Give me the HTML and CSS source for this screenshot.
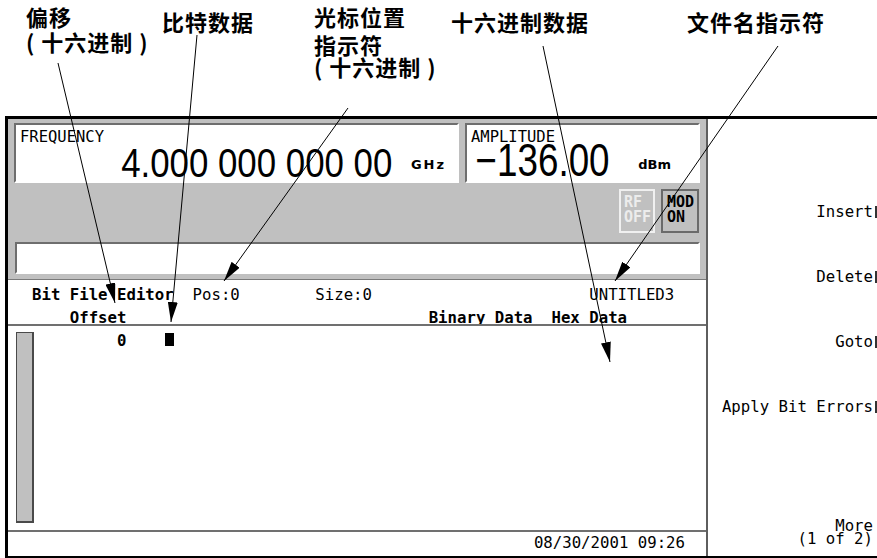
FILE: index.html
```html
<!DOCTYPE html>
<html>
    <head>
        <meta charset="UTF-8">
        <title>Bit File Editor</title>
        <link rel="stylesheet" href="styles.css">
    </head>
    <body>
        <div class="page">
            <!-- callout labels -->
            <div class="callouts">
                <div class="callout c-offset">偏移<br>( 十六进制 )</div>
                <div class="callout c-bits">比特数据</div>
                <div class="callout c-pos">
                    <div>光标位置</div>
                    <div class="pos-2">指示符</div>
                    <div class="pos-3">( 十六进制 )</div>
                </div>
                <div class="callout c-hex">十六进制数据</div>
                <div class="callout c-file">文件名指示符</div>
            </div>

            <div class="screen">
                <div class="display">
                    <div class="panel">
                        <div class="readouts">
                            <div class="readout freq">
                                <div class="readout-label">FREQUENCY</div>
                                <div class="readout-value">
                                    <span class="digits">4.000 000 000 00</span>
                                    <span class="unit">GHz</span>
                                </div>
                            </div>
                            <div class="readout ampl">
                                <div class="readout-label">AMPLITUDE</div>
                                <div class="readout-value">
                                    <span class="digits">&minus;136.00</span>
                                    <span class="unit">dBm</span>
                                </div>
                            </div>
                        </div>
                        <div class="indicators">
                            <div class="ind ind-off">RF<br>OFF</div>
                            <div class="ind ind-on">MOD<br>ON</div>
                        </div>
                        <div class="message"></div>
                    </div>

                    <div class="editor">
                        <div class="editor-head">
                            <div class="line"><b>Bit File Editor</b>  Pos:0        Size:0                       UNTITLED3</div>
                            <div class="line"><b>    Offset                                Binary Data  Hex Data</b></div>
                        </div>
                        <div class="editor-body">
                            <div class="scrollbar"></div>
                            <div class="rows">
                                <div class="row"><span class="cell-offset">0</span><span class="cursor"></span></div>
                            </div>
                        </div>
                        <div class="status">08/30/2001 09:26</div>
                    </div>
                </div>

                <div class="softkeys">
                    <div class="softkey">Insert<span class="edge"></span></div>
                    <div class="softkey">Delete<span class="edge"></span></div>
                    <div class="softkey">Goto<span class="edge"></span></div>
                    <div class="softkey">Apply Bit Errors<span class="edge"></span></div>
                    <div class="softkey"></div>
                    <div class="softkey more">   More
(1 of 2)</div>
                </div>
            </div>

            <!-- leader lines with arrow heads -->
            <svg class="leaders" width="877" height="558" viewBox="0 0 877 558">
                <defs>
                    <marker id="tip" markerWidth="20" markerHeight="10" refX="20" refY="5" orient="auto" markerUnits="userSpaceOnUse">
                        <path d="M0,0 L20,5 L0,10 Z" fill="#000"/>
                    </marker>
                </defs>
                <line x1="58" y1="63" x2="115" y2="303" marker-end="url(#tip)"/>
                <line x1="197" y1="35" x2="171" y2="322" marker-end="url(#tip)"/>
                <line x1="348" y1="108" x2="224" y2="281" marker-end="url(#tip)"/>
                <line x1="543" y1="46" x2="610" y2="362" marker-end="url(#tip)"/>
                <line x1="778" y1="46" x2="615" y2="281" marker-end="url(#tip)"/>
            </svg>
        </div>
    </body>
</html>
```

FILE: styles.css
```css
body{
    margin: 0;
    background: #fff;
    color: #000;
    font-family: "DejaVu Sans Mono", monospace;
}
.page{
    position: relative;
    width: 877px;
    height: 558px;
    overflow: hidden;
}

/* callouts */
.callouts{
    position: relative;
    height: 116px;
    font-family: "Noto Sans CJK SC", sans-serif;
    font-weight: 700;
    font-size: 22px;
    line-height: 24px;
    letter-spacing: 1px;
}
.callout{
    position: absolute;
    white-space: nowrap;
}
.c-offset{
    left: 26px;
    top: 4px;
    line-height: 25px;
}
.c-bits{
    left: 162px;
    top: 9px;
}
.c-pos{
    left: 314px;
    top: 4px;
}
.pos-2{
    margin-top: 4px;
}
.pos-3{
    margin-top: -2px;
}
.c-hex{
    left: 451px;
    top: 9px;
}
.c-file{
    left: 687px;
    top: 9px;
}

/* instrument screen */
.screen{
    display: flex;
    height: 437px;
    margin-left: 5px;
    border: solid #000;
    border-width: 3px 0 2px 3px;
    overflow: hidden;
}
.display{
    display: flex;
    flex-direction: column;
    flex-shrink: 0;
    width: 698px;
    border-right: 2px solid #5e5e5e;
}
.panel{
    background: #c0c0c0;
    padding: 4px 6px 5px 6px;
    border-bottom: 1px solid #7a7a7a;
}
.readouts{
    display: flex;
    gap: 6px;
}
.readout{
    box-sizing: border-box;
    height: 60px;
    background: #fff;
    border: 2px solid;
    border-color: #6e6e6e #fff #fff #6e6e6e;
    padding: 5px 11px 0 4px;
}
.freq{
    width: 445px;
}
.ampl{
    width: 235px;
    padding-right: 27px;
}
.readout-label{
    font-size: 15.5px;
    line-height: 14px;
}
.readout-value{
    display: flex;
    justify-content: flex-end;
    align-items: flex-end;
}
.digits{
    display: inline-block;
    flex-shrink: 0;
    font-family: "Liberation Sans", sans-serif;
    white-space: pre;
    transform: scaleX(.8);
    transform-origin: right center;
}
.freq .readout-value{
    margin-top: 4px;
}
.freq .digits{
    font-size: 40.5px;
    line-height: 30px;
    transform: scaleX(.86);
}
.ampl .readout-value{
    margin-top: 0;
}
.ampl .digits{
    font-size: 46px;
    line-height: 33px;
}
.unit{
    font-family: "DejaVu Sans", sans-serif;
    font-weight: 700;
    font-size: 13px;
    line-height: 10px;
}
.freq .unit{
    margin: 0 0 8px 19px;
    letter-spacing: 2px;
}
.ampl .unit{
    margin: 0 0 7px 29px;
}
.indicators{
    display: flex;
    justify-content: flex-end;
    gap: 6px;
    margin-top: 6px;
    padding-right: 1px;
}
.ind{
    box-sizing: border-box;
    height: 44px;
    padding: 4px 0 0 3px;
    border: 2px solid;
    font-weight: 700;
    font-size: 15px;
    line-height: 15px;
}
.ind-off{
    width: 36px;
    color: #ececec;
    border-color: #f0f0f0;
}
.ind-on{
    width: 38px;
    padding-left: 4px;
    border-color: #6a6a6a;
}
.message{
    height: 32px;
    box-sizing: border-box;
    margin: 9px 0 0 1px;
    width: 685px;
    background: #fff;
    border: 2px solid;
    border-color: #6e6e6e #fff #fff #6e6e6e;
}

/* editor */
.editor{
    display: flex;
    flex-direction: column;
    flex: 1;
    font-size: 15.7px;
}
.editor-head{
    height: 46px;
    box-sizing: border-box;
    padding: 3px 0 0 24px;
    border-bottom: 2px solid #707070;
    overflow: hidden;
}
.line{
    white-space: pre;
    line-height: 23px;
}
.editor-body{
    display: flex;
    height: 204px;
    border-bottom: 2px solid #707070;
}
.scrollbar{
    width: 18px;
    height: 191px;
    box-sizing: border-box;
    margin: 6px 0 0 8px;
    background: #c0c0c0;
    border: 1px solid #4a4a4a;
    border-right-width: 2px;
    border-bottom-width: 2px;
}
.rows{
    padding-top: 3px;
}
.row{
    line-height: 23px;
    white-space: nowrap;
}
.cell-offset{
    display: inline-block;
    width: 92.5px;
    text-align: right;
    font-weight: 700;
}
.cursor{
    display: inline-block;
    width: 9px;
    height: 13px;
    margin-left: 38.5px;
    background: #000;
}
.status{
    flex: 1;
    text-align: right;
    padding-right: 21px;
    line-height: 21px;
}

/* softkeys */
.softkeys{
    flex-shrink: 0;
    width: 175px;
    padding-top: 60px;
    font-size: 15.7px;
}
.softkey{
    box-sizing: border-box;
    display: flex;
    align-items: center;
    justify-content: flex-end;
    height: 65px;
    padding-right: 6px;
    white-space: pre;
    line-height: 13px;
}
.softkey .edge{
    width: 2px;
    height: 12px;
    margin-left: 2px;
    background: #333;
}
.more{
    padding: 0 10px 10px 0;
    text-align: right;
}

.leaders{
    position: absolute;
    left: 0;
    top: 0;
    pointer-events: none;
}
.leaders line{
    stroke: #000;
    stroke-width: 1;
}
```
